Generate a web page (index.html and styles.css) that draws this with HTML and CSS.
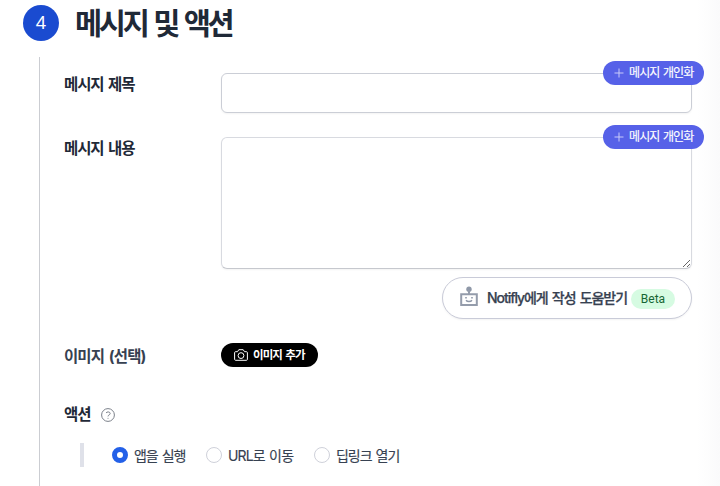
FILE: index.html
```html
<!DOCTYPE html>
<html lang="ko">
<head>
<meta charset="utf-8">
<title>메시지 및 액션</title>
<link rel="stylesheet" href="styles.css">
</head>
<body>
<main class="step">
  <header class="step-header">
    <span class="step-number">4</span>
    <h1>메시지 및 액션</h1>
  </header>
  <div class="step-body">
    <div class="row row-title">
      <label class="label" for="title">메시지 제목</label>
      <div class="field">
        <input class="control" id="title" type="text">
        <button class="personalize" type="button"><svg width="10" height="10" viewBox="0 0 10 10"><path d="M5 .5v9M.5 5h9"/></svg><span>메시지 개인화</span></button>
      </div>
    </div>
    <div class="row row-content">
      <label class="label" for="content">메시지 내용</label>
      <div class="field">
        <textarea class="control area" id="content"></textarea>
        <button class="personalize" type="button"><svg width="10" height="10" viewBox="0 0 10 10"><path d="M5 .5v9M.5 5h9"/></svg><span>메시지 개인화</span></button>
        <button class="assist" type="button">
          <svg class="robot" width="18" height="21" viewBox="0 0 18 21"><circle cx="9" cy="3.2" r="2.7" fill="#8f98a8"/><path d="M9 4v4M1.2 8.2h15.6v10.8H1.2z" fill="none" stroke="#949cab" stroke-width="2"/><path d="M5.2 11.8h1.6M11.2 11.8h1.6M6 14.2c1.4 1.800 4.600 1.800 6 0" fill="none" stroke="#8f98a8" stroke-width="1.4"/></svg>
          <span class="assist-text">Notifly에게 작성 도움받기</span>
          <span class="beta">Beta</span>
        </button>
      </div>
    </div>
    <div class="row row-image">
      <span class="label label-soft">이미지 (선택)</span>
      <button class="add-image" type="button"><svg width="14" height="12" viewBox="0 0 14 12"><path d="M1.5 2.7h2L4.8.7h4.4l1.3 2h2c.5 0 .9.4.9.9v6.8c0 .5-.4.9-.9.9h-11c-.5 0-.9-.4-.9-.9V3.6c0-.5.4-.9.9-.9z"/><circle cx="7" cy="6.6" r="2.9"/></svg><span>이미지 추가</span></button>
    </div>
    <div class="action-head">
      <span class="label action-label">액션</span>
      <svg width="14" height="14" viewBox="0 0 14 14"><circle cx="7" cy="7" r="6.4"/><path d="M5 5C5.600 3.500 9.200 3.500 9.200 5.500 9.200 6.900 7 6.900 7 8.400M7 9.900v.8"/></svg>
    </div>
    <div class="options">
      <label class="option"><input type="radio" name="action" checked><span class="opt-run">앱을 실행</span></label>
      <label class="option"><input type="radio" name="action"><span class="opt-url">URL로 이동</span></label>
      <label class="option"><input type="radio" name="action"><span class="opt-link">딥링크 열기</span></label>
    </div>
  </div>
</main>
</body>
</html>
```
FILE: styles.css
```css
* { box-sizing: border-box; }
body {
  margin: 0;
  height: 486px;
  overflow: hidden;
  color: #1f2937;
  background: linear-gradient(to right, #fff 697px, #fafafb 720px);
  font-family: Inter, "Noto Sans CJK KR", sans-serif;
}
button, input, textarea { font: inherit; margin: 0; }
button { border: 0; white-space: nowrap; }
.step { padding: 5px 28px 0 23px; }
.step-header { display: flex; align-items: center; height: 36px; gap: 16px; }
.step-number {
  width: 36px; height: 36px; border-radius: 50%;
  background: #1a4bd0; color: #fff;
  font-family: "Noto Sans", sans-serif;
  font-size: 18px; line-height: 35px; text-align: center;
}
h1 { margin: 0; font-size: 29.5px; line-height: 36px; font-weight: 700; letter-spacing: -3.3px; word-spacing: 3px; white-space: nowrap; }
.step-body { margin: 16px 0 0 16px; height: 429px; border-left: 1px solid #cbcdd2; padding: 16px 0 0 24px; }
.row { display: flex; }
.label { width: 157px; height: 24px; flex: none; font-size: 15.5px; line-height: 24px; font-weight: 700; letter-spacing: -1.1px; word-spacing: 2px; white-space: nowrap; }
.label-soft { color: #374151; letter-spacing: -.9px; }
.field { position: relative; width: 471px; }
.control {
  display: block; width: 100%; height: 40px; padding: 8px;
  border: 1px solid #cbced6; border-radius: 6px; background: #fff;
  box-shadow: 0 1px 2px rgba(0, 0, 0, .05); outline: 0;
}
.row-content { margin-top: 24px; }
.area { height: 132px; resize: vertical; border-color: #d8dae0 #d8dae0 #c6c8ce; }
.personalize {
  position: absolute; top: -12px; right: -12px;
  display: flex; align-items: center; gap: 5px;
  width: 101px; height: 24px; padding: 0 0 0 11px; border-radius: 12px;
  background: #5661e8; color: #fff;
  font-size: 12px; font-weight: 400; letter-spacing: -.9px; word-spacing: 1px;
}
.personalize span { padding-bottom: 3px; -webkit-text-stroke: .15px currentColor; }
.add-image span { padding-bottom: 2px; }
.personalize svg { fill: none; stroke: #c8cbfa; stroke-width: 1; }
.assist {
  display: flex; align-items: center;
  width: 250px; height: 42px; margin: 8px 0 0 auto; padding: 0 16px 0 17px;
  border: 1px solid #c9cbd8; border-radius: 21px; background: #fff;
  box-shadow: 0 1px 2px rgba(0, 0, 0, .05); color: #374151;
}
.robot { margin-top: -3px; }
.assist-text { margin-left: 9px; padding-bottom: 2px; font-size: 14px; font-weight: 500; letter-spacing: -1.05px; word-spacing: 1.5px; -webkit-text-stroke: .25px currentColor; }
.beta { width: 44px; height: 20px; margin: 1px 0 0 auto; border-radius: 10px; background: #d6fbe2; color: #166534; font-family: Roboto, sans-serif; font-size: 12px; line-height: 20px; }
.row-image { margin-top: 24px; height: 24px; }
.row-image .label { margin-top: 2px; }
.add-image {
  display: flex; align-items: center; gap: 5px;
  width: 97px; height: 24px; padding: 0 0 0 13px; border-radius: 12px;
  background: #000; color: #fff; font-size: 11.5px; font-weight: 700; letter-spacing: -.9px; word-spacing: 1.5px;
}
.add-image svg { fill: none; stroke: #fff; stroke-width: 1; }
.action-head { display: flex; align-items: center; margin-top: 36px; height: 24px; }
.action-label { width: 37px; }
.action-head svg { fill: none; stroke: #7b808a; stroke-width: 1; }
.options {
  display: flex; align-items: center; gap: 20px;
  height: 24px; margin: 16px 0 0 16px; padding-left: 28px;
  border-left: 4px solid #dfe1e9;
}
.option { display: flex; align-items: center; gap: 6px; color: #374151; font-size: 14px; letter-spacing: -1.05px; word-spacing: 1.2px; white-space: nowrap; }
.option span { padding-bottom: 1px; -webkit-text-stroke: .15px currentColor; }
.option input { appearance: none; width: 16px; height: 16px; border: 1px solid #cfd1da; border-radius: 50%; background: #fff; }
.option input:checked { border: 5px solid #2360e8; }
.opt-run { width: 52px; }
.opt-url { width: 66px; letter-spacing: -.85px; }
.opt-link { width: 65px; }
```
